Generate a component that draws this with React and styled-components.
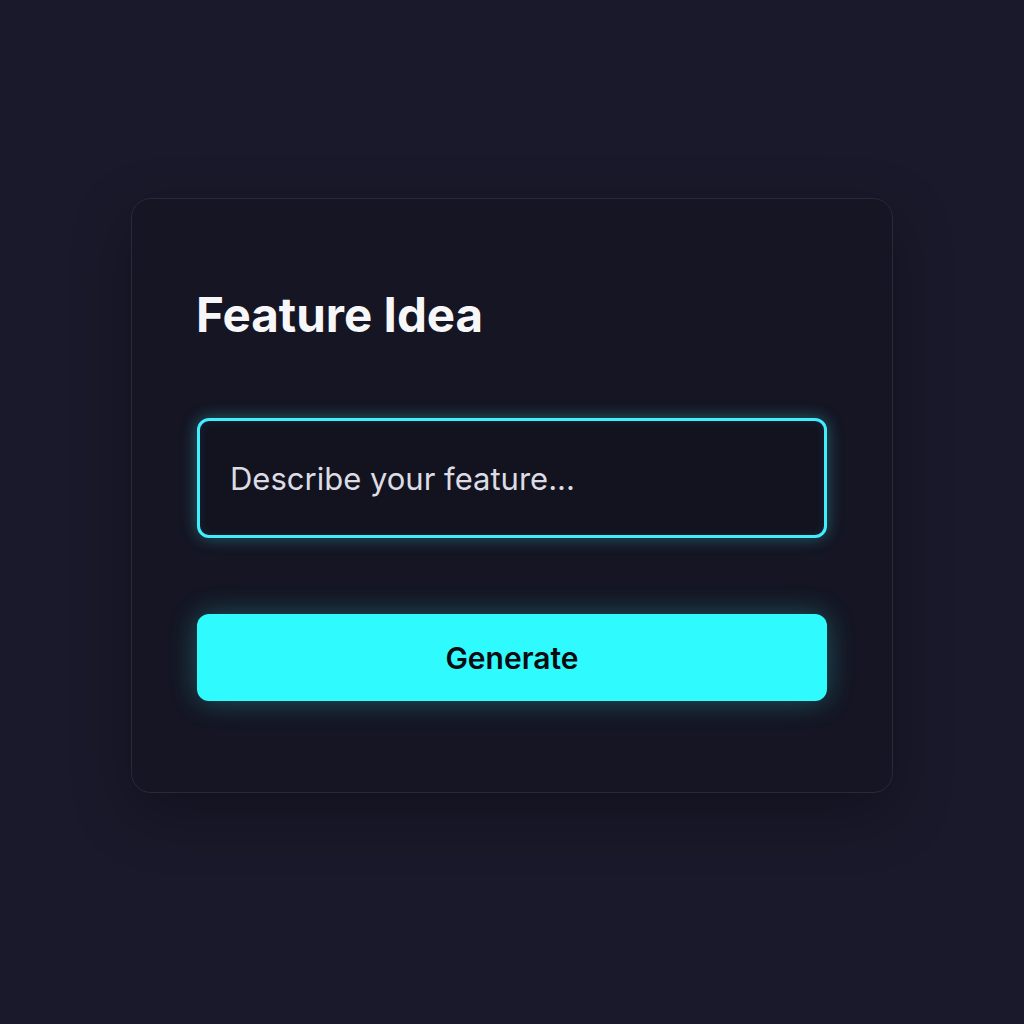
import styled, { createGlobalStyle } from "styled-components"

const GlobalStyle = createGlobalStyle`
html, body {
margin: 0;
padding: 0;
background: #19192b;
}
body {
font-family: 'Inter', 'Noto Sans', sans-serif;
}
`

const Page = styled.div`
min-height: 1024px;
display: flex;
align-items: center;
justify-content: center;
padding-bottom: 33px;
box-sizing: border-box;
background: #19192b;
`

const Card = styled.div`
width: 762px;
box-sizing: border-box;
padding: 88px 65px 91px 65px;
background: #151523;
border: 1px solid #292938;
border-radius: 20px;
box-shadow: 0 20px 60px rgba(0, 0, 0, 0.3);
display: flex;
flex-direction: column;
`

const Title = styled.h2`
margin: 0 0 75px -1px;
font-size: 47.5px;
line-height: 56px;
font-weight: 700;
color: #f7f7fa;
`

const Input = styled.input`
height: 120px;
box-sizing: border-box;
padding: 0 30px;
background: #131320;
border: 3px solid #40eefc;
border-radius: 12px;
box-shadow: 0 0 16px rgba(64, 238, 252, 0.35), inset 0 0 10px rgba(64, 238, 252, 0.08);
font-family: 'Inter', 'Noto Sans', sans-serif;
font-size: 31px;
color: #e4e4ec;
outline: none;
margin-bottom: 76px;
&::placeholder {
color: #dcdce4;
}
`

const Button = styled.button`
height: 87px;
border: none;
border-radius: 12px;
background: #2ffbff;
box-shadow: 0 0 28px rgba(47, 251, 255, 0.28);
font-family: 'Inter', 'Noto Sans', sans-serif;
font-size: 30px;
font-weight: 600;
color: #0b0b10;
cursor: pointer;
`

const App = () => {
    return (
        <>
            <GlobalStyle />
            <Page>
                <Card>
                    <Title>Feature Idea</Title>
                    <Input placeholder="Describe your feature..." />
                    <Button>Generate</Button>
                </Card>
            </Page>
        </>
    )
}
export default App
